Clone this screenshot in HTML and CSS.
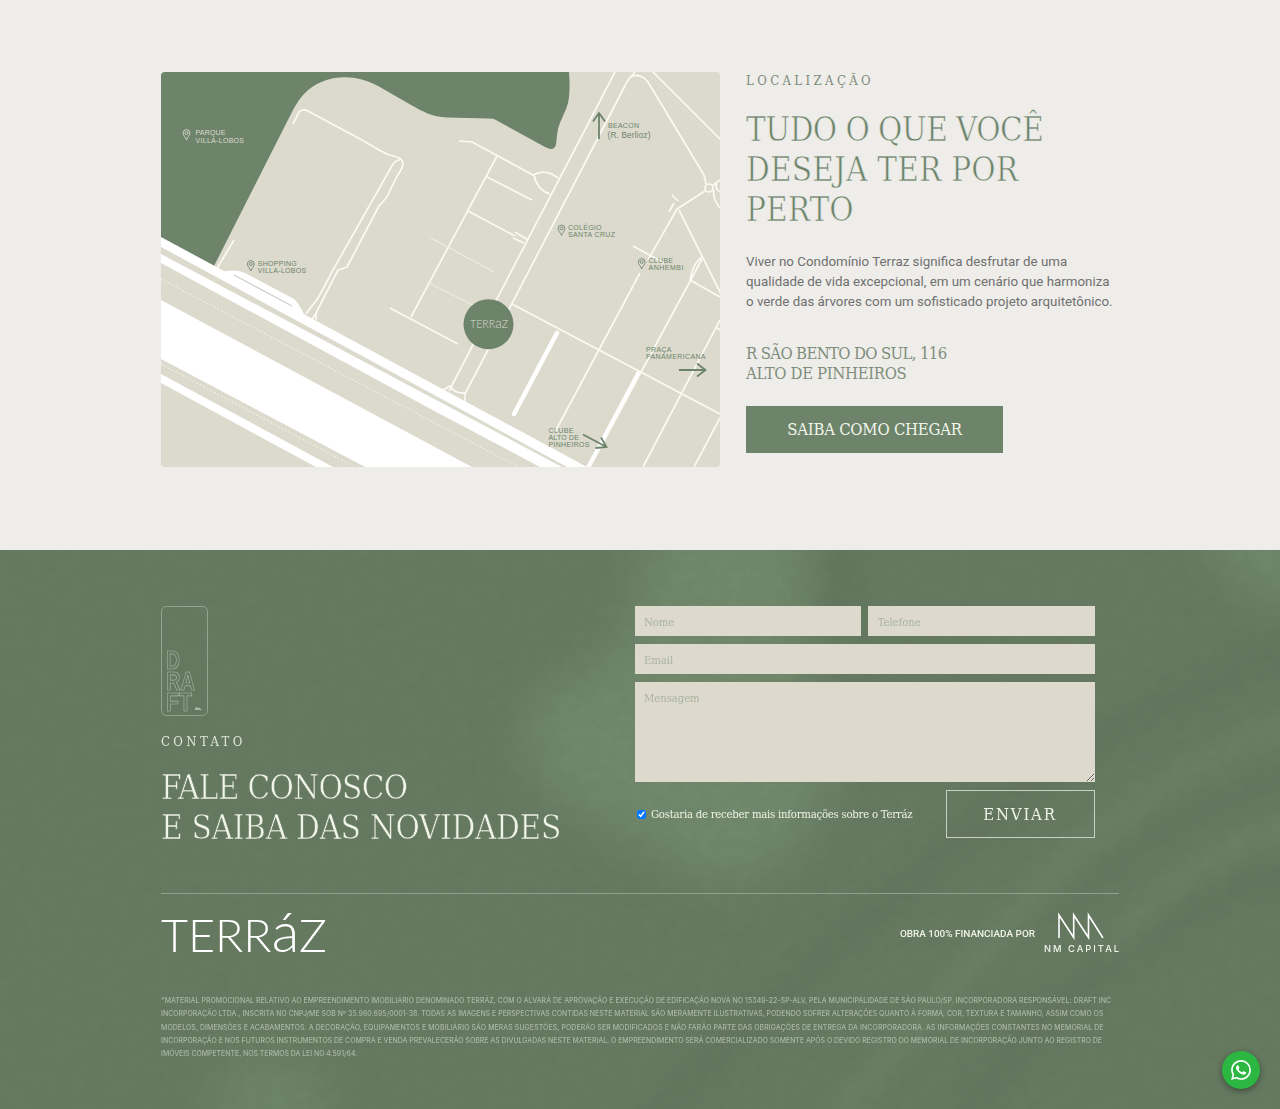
FILE: index.html
```html
<!DOCTYPE html>
<html lang="pt-BR">
<head>
<meta charset="utf-8">
<title>Terráz</title>
<link rel="stylesheet" href="styles.css">
</head>
<body>
<section class="location">
  <svg class="map" viewBox="161 72 559 395" role="img" aria-label="Mapa">
    <rect x="161" y="72" width="559" height="395" fill="#dbdacd"/>
    <path fill="#6d846b" d="M161 72H569Q570.500 92 568 103C565 114 559 122 557.500 132C556 140 557 146 554 148Q551 150 546 147.500L495 119.500Q493 118.500 489 118.500L447 117.500C432 117 422 111 412 105.500L378 86C352 71 320 76 304 94Q299 99 293 110L214 266L161 240Z"/>
    <g fill="#fff">
      <path d="M161 237L587 467H567L161 247Z"/>
      <path d="M161 254L440 402L562 467H540L440 414L161 263Z"/>
      <path d="M161 300L472 467H365L161 359Z"/>
      <path d="M161 374L333 467H316L161 383Z"/>
      <path d="M221 272Q236 268 247 274L294 299Q298 302 305 316L290 310Z"/>
    </g>
    <path d="M234 275L292 306" stroke="#cfd0c8" stroke-width="1.300"/>
    <g stroke="#efeee2" stroke-width="1.200" stroke-dasharray="2 2" fill="none">
      <path d="M161 279L530 473M161 364L353 466"/>
    </g>
    <g stroke="#fbfaf3" stroke-width="1.700" fill="none" stroke-linejoin="round">
      <path d="M293 124L299 112Q302 108.500 308 111L360 139C375 147 380 152 391 155.500C400 157 405 160 402 168L396 178L387 197L379 206L347 267L338 270L316 313V320"/>
      <path d="M400 160Q396 160 393 164L333 270L322 291C315 305 310 307 306 314M317 312L312 319"/>
      <path d="M234 240L216 270"/>
      <path d="M459 141L472 142L533 175Q546 168 558 178M534 175Q537 190 550 194"/>
      <path d="M615 72L449 391M635 72L628 80L465 394M630 77Q640 72 648 82L704 175L706 184"/>
      <path d="M653 72L720 139"/>
      <path d="M497 156L411 317M487 177L532 200M468 211L515 236M515 232L528 240M513 238L524 243M390 308L458 344"/>
      <path d="M705 191L677 209L648 260M679 210L754 360M633 246L664 263M669 212L674 203M672 195L678 201M702 257Q695 262 692 272L690 280M640 273L555 432M512 304L720 414M702 259L590 467M690 280L720 297M716 327L720 330M720 320L643 467M720 418L694 467"/>
      <path d="M443 390L450 386Q455 394 465 393V401"/>
      <circle cx="709" cy="188" r="4"/>
      <path d="M712 186L720 180M714 190Q712 198 720 208M717 182Q714 188 720 192"/>
    </g>
    <g stroke="#fff" fill="none" stroke-linecap="round">
      <path stroke-width="4.500" d="M557 333L514 414"/>
      <path stroke-width="3.500" d="M638 373L588 467"/>
    </g>
    <g stroke="#eeede2" stroke-width="1.100" fill="none"><path d="M431 238L494 272M427 282L477 307"/></g>
    <circle cx="488.500" cy="324.200" r="25" fill="#6d846b"/>
    <text class="map-logo" x="470" y="328" textLength="38" lengthAdjust="spacingAndGlyphs">TERR<tspan class="tall">a</tspan>Z</text>
    <g class="map-pale">
      <text x="195.500" y="135.300" textLength="30">PARQUE</text><text x="195.500" y="142.800" textLength="48.500">VILLA-LOBOS</text>
      <path class="pin" transform="translate(186.500 140)" d="M0 0C-1-3-3.400-4.500-3.400-7A3.400 3.400 0 0 1 3.400-7C3.400-4.500 1-3 0 0ZM-1.500-7a1.500 1.500 0 1 0 3 0a1.500 1.500 0 1 0-3 0"/>
    </g>
    <g class="map-dark">
      <text x="257.700" y="266" textLength="39">SHOPPING</text><text x="257.700" y="273.300" textLength="48.500">VILLA-LOBOS</text>
      <text x="568" y="229.500" textLength="33.500">COLÉGIO</text><text x="568" y="237" textLength="47">SANTA CRUZ</text>
      <text x="648.500" y="263" textLength="24.500">CLUBE</text><text x="648.500" y="270.300" textLength="35">ANHEMBI</text>
      <text x="608" y="128.300" textLength="31">BEACON</text><text class="street" x="607.500" y="137.700" textLength="43">(R. Berlioz)</text>
      <text x="646" y="351.500" textLength="25.500">PRAÇA</text><text x="646" y="359" textLength="59.500">PANAMERICANA</text>
      <text x="548.500" y="432.500" textLength="25">CLUBE</text><text x="548.500" y="439.800" textLength="30.500">ALTO DE</text><text x="548.500" y="447.200" textLength="41">PINHEIROS</text>
      <path class="pin" transform="translate(250.800 271)" d="M0 0C-1-3-3.400-4.500-3.400-7A3.400 3.400 0 0 1 3.400-7C3.400-4.500 1-3 0 0ZM-1.500-7a1.500 1.500 0 1 0 3 0a1.500 1.500 0 1 0-3 0"/>
      <path class="pin" transform="translate(561.500 235.500)" d="M0 0C-1-3-3.400-4.500-3.400-7A3.400 3.400 0 0 1 3.400-7C3.400-4.500 1-3 0 0ZM-1.500-7a1.500 1.500 0 1 0 3 0a1.500 1.500 0 1 0-3 0"/>
      <path class="pin" transform="translate(641.700 269)" d="M0 0C-1-3-3.400-4.500-3.400-7A3.400 3.400 0 0 1 3.400-7C3.400-4.500 1-3 0 0ZM-1.500-7a1.500 1.500 0 1 0 3 0a1.500 1.500 0 1 0-3 0"/>
      <path class="arrow" d="M599 139V113M593 121.500L599 113L605 121.500M679 370H705M697 363.500L705.500 370L697 376.500M583 434.500L606.500 447M601 437.500L606.500 447L595.500 448"/>
    </g>
  </svg>
  <div class="info">
    <p class="eyebrow">LOCALIZAÇÃO</p>
    <h2 class="title"><span class="t1">TUDO O QUE VOCÊ</span><br><span class="t2">DESEJA TER POR</span><br><span class="t3">PERTO</span></h2>
    <p class="copy">Viver no Condomínio Terraz significa desfrutar de uma<br>qualidade de vida excepcional, em um cenário que harmoniza<br>o verde das árvores com um sofisticado projeto arquitetônico.</p>
    <p class="address"><span class="a1">R SÃO BENTO DO SUL, 116</span><br><span class="a2">ALTO DE PINHEIROS</span></p>
    <a class="directions">SAIBA COMO CHEGAR</a>
  </div>
</section>

<footer class="contact">
  <svg class="backdrop" viewBox="0 0 1280 559" preserveAspectRatio="none" aria-hidden="true">
    <defs>
      <filter id="soft" x="-50%" y="-50%" width="200%" height="200%" color-interpolation-filters="sRGB"><feGaussianBlur stdDeviation="24"/></filter>
      <filter id="mid" x="-50%" y="-50%" width="200%" height="200%" color-interpolation-filters="sRGB"><feGaussianBlur stdDeviation="11"/></filter>
      <filter id="paper" x="0" y="0" width="100%" height="100%" color-interpolation-filters="sRGB">
        <feTurbulence type="fractalNoise" baseFrequency=".07 .09" numOctaves="3" seed="4"/>
        <feColorMatrix values="0 0 0 0 .32  0 0 0 0 .37  0 0 0 0 .3  .9 0 0 0 -.32"/>
      </filter>
    </defs>
    <rect width="1280" height="559" fill="#667a61"/>
    <g filter="url(#soft)" fill="#70886c">
      <path d="M660 -40H806V120L840 220L780 320Q700 350 640 290Q500 250 530 150L620 100Z"/>
      <ellipse cx="270" cy="550" rx="60" ry="40" opacity=".8"/>
      <path d="M1190 -40H1310V60Q1230 50 1190 -40Z"/>
    </g>
    <g filter="url(#mid)" fill="none">
      <path stroke="#62755d" stroke-width="34" opacity=".8" d="M842 -20V70"/>
      <path stroke="#61745c" stroke-width="26" opacity=".8" d="M1300 100Q1130 150 960 290T640 580M1300 320Q1120 360 960 570"/>
      <path stroke="#6c8268" stroke-width="24" opacity=".8" d="M1300 170Q1130 230 1010 370T830 570M1300 270Q1180 310 1110 400"/>
      <path stroke="#61745c" stroke-width="12" opacity=".8" d="M1300 225Q1150 260 1050 380"/>
    </g>
    <rect width="1280" height="559" filter="url(#paper)" opacity=".15"/>
  </svg>
  <div class="inner">
    <div class="top">
      <div class="pitch">
        <svg class="draft" viewBox="0 0 47 110" role="img" aria-label="Draft">
          <rect x=".5" y=".5" width="46" height="109" rx="5"/>
          <text x="5" y="62.500" textLength="14" lengthAdjust="spacingAndGlyphs">D</text>
          <text x="5" y="83.500" textLength="29" lengthAdjust="spacingAndGlyphs">RA</text>
          <text x="5" y="104.500" textLength="26" lengthAdjust="spacingAndGlyphs">FT</text>
          <path class="mark" d="M34 101.500h4l3 2.500h-7z"/>
        </svg>
        <p class="eyebrow light">CONTATO</p>
        <h2 class="title light"><span class="t4">FALE CONOSCO</span><br><span class="t5">E SAIBA DAS NOVIDADES</span></h2>
      </div>
      <form class="form">
        <input class="field" type="text" placeholder="Nome">
        <input class="field" type="text" placeholder="Telefone">
        <input class="field wide" type="text" placeholder="Email">
        <textarea class="field area wide" placeholder="Mensagem"></textarea>
        <div class="send-row wide">
          <label class="optin"><input class="check" type="checkbox" checked><span>Gostaria de receber mais informações sobre o Terráz</span></label>
          <button class="send" type="button">ENVIAR</button>
        </div>
      </form>
    </div>
    <div class="brands">
      <svg class="terraz" viewBox="0 0 166 42" role="img" aria-label="Terráz">
        <text x="0" y="40" textLength="166" lengthAdjust="spacingAndGlyphs">TERR<tspan class="tall">á</tspan>Z</text>
      </svg>
      <div class="funding">
        <span>OBRA 100% FINANCIADA POR</span>
        <svg class="nm" viewBox="0 0 75 40" role="img" aria-label="NM Capital">
          <path d="M15 25V2L29.700 24.500V2L44.500 24.500V2L59 25"/>
          <text x="0" y="38.500" textLength="75">NM CAPITAL</text>
        </svg>
      </div>
    </div>
    <p class="legal"><span class="l1">*MATERIAL PROMOCIONAL RELATIVO AO EMPREENDIMENTO IMOBILIÁRIO DENOMINADO TERRÁZ, COM O ALVARÁ DE APROVAÇÃO E EXECUÇÃO DE EDIFICAÇÃO NOVA NO 15349-22-SP-ALV, PELA MUNICIPALIDADE DE SÃO PAULO/SP. INCORPORADORA RESPONSÁVEL: DRAFT INC</span>
      <span class="l2">INCORPORAÇÃO LTDA., INSCRITA NO CNPJ/ME SOB Nº 35.960.695/0001-38. TODAS AS IMAGENS E PERSPECTIVAS CONTIDAS NESTE MATERIAL SÃO MERAMENTE ILUSTRATIVAS, PODENDO SOFRER ALTERAÇÕES QUANTO À FORMA, COR, TEXTURA E TAMANHO, ASSIM COMO OS</span>
      <span class="l3">MODELOS, DIMENSÕES E ACABAMENTOS. A DECORAÇÃO, EQUIPAMENTOS E MOBILIÁRIO SÃO MERAS SUGESTÕES, PODERÃO SER MODIFICADOS E NÃO FARÃO PARTE DAS OBRIGAÇÕES DE ENTREGA DA INCORPORADORA. AS INFORMAÇÕES CONSTANTES NO MEMORIAL DE</span>
      <span class="l4">INCORPORAÇÃO E NOS FUTUROS INSTRUMENTOS DE COMPRA E VENDA PREVALECERÃO SOBRE AS DIVULGADAS NESTE MATERIAL. O EMPREENDIMENTO SERÁ COMERCIALIZADO SOMENTE APÓS O DEVIDO REGISTRO DO MEMORIAL DE INCORPORAÇÃO JUNTO AO REGISTRO DE</span>
      <span class="l5">IMÓVEIS COMPETENTE, NOS TERMOS DA LEI NO 4.591/64.</span></p>
  </div>
</footer>
<a class="whatsapp" aria-label="WhatsApp">
  <svg viewBox="0 0 24 24"><path d="M17.472 14.382c-.297-.149-1.758-.867-2.030-.967-.273-.099-.471-.148-.670.150-.197.297-.767.966-.940 1.164-.173.199-.347.223-.644.075-.297-.150-1.255-.463-2.390-1.475-.883-.788-1.480-1.761-1.653-2.059-.173-.297-.018-.458.130-.606.134-.133.298-.347.446-.520.149-.174.198-.298.298-.497.099-.198.050-.371-.025-.520-.075-.149-.669-1.612-.916-2.207-.242-.579-.487-.500-.669-.510-.173-.008-.371-.010-.570-.010-.198 0-.520.074-.792.372-.272.297-1.040 1.016-1.040 2.479 0 1.462 1.065 2.875 1.213 3.074.149.198 2.096 3.200 5.077 4.487.709.306 1.262.489 1.694.625.712.227 1.360.195 1.871.118.571-.085 1.758-.719 2.006-1.413.248-.694.248-1.289.173-1.413-.074-.124-.272-.198-.570-.347m-5.421 7.403h-.004a9.870 9.870 0 0 1-5.031-1.378l-.361-.214-3.741.982.998-3.648-.235-.374a9.860 9.860 0 0 1-1.510-5.260c.001-5.450 4.436-9.884 9.888-9.884 2.640 0 5.122 1.030 6.988 2.898a9.825 9.825 0 0 1 2.893 6.994c-.003 5.450-4.437 9.884-9.885 9.884m8.413-18.297A11.815 11.815 0 0 0 12.050 0C5.495 0 .160 5.335.157 11.892c0 2.096.547 4.142 1.588 5.945L.057 24l6.305-1.654a11.882 11.882 0 0 0 5.683 1.448h.005c6.554 0 11.890-5.335 11.893-11.893a11.821 11.821 0 0 0-3.480-8.413Z"/></svg>
</a>
</body>
</html>
```
FILE: styles.css
```css
* { box-sizing: border-box; }
:root { --slab: "Roboto Slab", "DejaVu Serif Condensed", "DejaVu Serif", serif; }
body { margin: 0; background: #eeede9; color: #707070; font-family: Roboto, sans-serif; }
p, h2 { margin: 0; }
.location { height: 550px; padding: 72px 161px 0; display: flex; gap: 26px; }
.map { width: 559px; height: 395px; flex: none; border-radius: 4px; font-family: "Liberation Sans", Arial, sans-serif; font-size: 7px; }
.map-pale { fill: #dbdacd; }
.map-dark { fill: #6d846b; }
.map .street { font-size: 8.2px; }
.pin { fill: none; stroke: #7d9079; stroke-width: 1; }
.map-pale .pin { stroke: #cdd2c3; }
.arrow { fill: none; stroke: #6d846b; stroke-width: 1.8; }
.map-logo { font: 300 11px Lato, sans-serif; fill: #dbdacd; }
.map-logo .tall { font-size: 14px; }
.info { flex: none; width: 373px; padding-top: 1px; }
.eyebrow { font: 300 13px/16px var(--slab); letter-spacing: 3.4px; color: #7d8a7a; white-space: nowrap; }
.title { margin-top: 21px; font: 300 33px/40px var(--slab); color: #6d846b; white-space: nowrap; -webkit-text-stroke: .6px #eeede9; }
.t1 { letter-spacing: -.6px; }
.t2 { letter-spacing: .15px; }
.t4 { letter-spacing: -.7px; }
.t5 { letter-spacing: -.3px; }
.copy { margin-top: 22px; font-size: 13.340px; line-height: 20px; white-space: nowrap; }
.address { margin-top: 32px; font: 300 16.600px/20px var(--slab); color: #7f8d7c; white-space: nowrap; }
.a1 { letter-spacing: -.65px; }
.a2 { letter-spacing: -.35px; }
.directions { margin-top: 22px; display: flex; align-items: center; justify-content: center; width: 257px; height: 47px; padding-top: 1px; background: #6d846b; color: #f2f4ea; font: 300 16.600px/20px var(--slab); letter-spacing: -.25px; white-space: nowrap; }

.contact { position: relative; height: 559px; overflow: hidden; color: #eef2e6; }
.backdrop { position: absolute; inset: 0; width: 100%; height: 100%; }
.inner { position: relative; padding: 56px 161px 0; }
.top { display: flex; justify-content: space-between; height: 288px; border-bottom: 1px solid #8fa08b; }
.draft { display: block; width: 47px; height: 110px; fill: none; stroke: #a9b8a4; stroke-width: .7; font: 700 26px "Liberation Sans", Arial, sans-serif; }
.draft .mark { fill: #a9b8a4; stroke: none; }
.eyebrow.light { margin-top: 18px; color: #dfe8d9; }
.title.light { color: #f0f4e9; margin-top: 18px; -webkit-text-stroke-color: #667a63; }
.form { width: 460px; margin-right: 24.500px; display: grid; grid-template-columns: 1fr 1fr; gap: 8px 7.500px; align-content: start; }
.wide { grid-column: 1 / -1; }
.field { width: 100%; height: 30px; margin: 0; padding: 2px 9.500px 0; border: 0; border-radius: 0; background: #ddd9cd; font: 300 11.3px/16px var(--slab); letter-spacing: -.1px; color: #6d846b; outline: 0; }
.field::placeholder { color: #a9b4a0; opacity: 1; }
.area { height: 100px; padding-top: 8.500px; display: block; }
.send-row { display: flex; justify-content: space-between; }
.optin { display: flex; align-items: center; gap: 5px; padding-left: 2.500px; font: 300 11.3px/16px var(--slab); letter-spacing: -.25px; white-space: nowrap; }
.optin span { padding-top: 1px; }
.check { width: 9px; height: 9px; margin: 0; }
.send { width: 149px; height: 48px; padding: 1px 0 0; border: 1px solid #c6d3c0; background: none; color: #eef2e6; font: 300 16.600px/20px var(--slab); letter-spacing: 1.800px; }
.brands { height: 100px; padding-top: 18px; display: flex; justify-content: space-between; }
.terraz { width: 166px; height: 42px; overflow: visible; fill: #fff; font: 300 46px Lato, sans-serif; }
.terraz .tall { font-size: 56px; }
.funding { display: flex; gap: 9px; height: 42px; font: 500 9.950px/43px Roboto, sans-serif; white-space: nowrap; }
.nm { width: 75px; height: 40px; margin-top: 1px; fill: #f2f5ee; font: 500 9.300px Inter, sans-serif; overflow: visible; }
.nm path { fill: none; stroke: #fff; stroke-width: 1.6; }
.legal { font: 500 6.900px/13.300px Inter, sans-serif; color: #a9b8a4; white-space: nowrap; }
.legal span { display: block; }
.l1 { letter-spacing: .064px; }
.l2 { letter-spacing: .038px; }
.l3 { letter-spacing: .110px; }
.l4 { letter-spacing: .025px; }
.whatsapp { position: fixed; right: 20px; bottom: 20px; width: 38px; height: 38px; border-radius: 50%; background: #2cb742; box-shadow: 0 2px 6px #0006; display: flex; align-items: center; justify-content: center; }
.whatsapp svg { width: 20px; height: 20px; fill: #fff; }
```
